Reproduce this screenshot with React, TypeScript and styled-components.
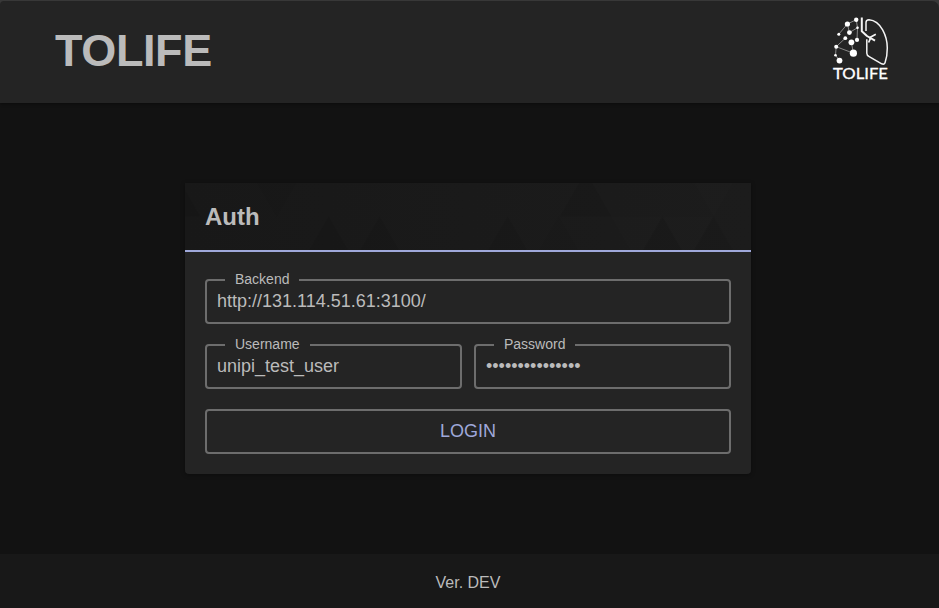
import React from "react";
import styled, { createGlobalStyle } from "styled-components";

const Global = createGlobalStyle`
  * { box-sizing: border-box; }
  body {
    margin: 0;
    background: #121212;
    color: #bbbbbb;
    font-family: "Liberation Sans", Arial, Helvetica, sans-serif;
    font-size: 18px;
  }
`;

const Page = styled.div`
  height: 608px;
  display: flex;
  flex-direction: column;
  overflow: hidden;
  background: #121212;
`;

const Frame = styled.div`
  flex: none;
  padding-top: 1px;
  background: #383838;
  box-shadow: 0 1px 3px rgba(0, 0, 0, 0.4);
`;

const Header = styled.header`
  height: 102px;
  padding: 0 50px 0 54px;
  display: flex;
  justify-content: space-between;
  align-items: flex-start;
  background: #242424;
  border-radius: 4px 7px 0 0;
`;

const Title = styled.h1`
  margin: 24px 0 0 1px;
  font-size: 45px;
  line-height: 52px;
  font-weight: 700;
  letter-spacing: -0.4px;
`;

const Logo = styled.svg`
  width: 60px;
  height: 70px;
  margin: 12px -1px 0 0;
  font-family: Lato, sans-serif;
`;

const Main = styled.main`
  flex: 1;
  display: flex;
  justify-content: center;
  align-items: flex-start;
  padding: 80px 3px 0 0;
`;

const Card = styled.section`
  width: 566px;
  height: 291px;
  background: #242424;
  border-radius: 0 0 4px 4px;
  box-shadow: 0 1px 4px rgba(0, 0, 0, 0.35);
`;

const CardHeader = styled.div`
  display: grid;
  height: 69px;
  background: linear-gradient(90deg, #181818, #1c1c1c);
  border-bottom: 2px solid #9fa8da;
  overflow: hidden;
  > * { grid-area: 1 / 1; }
`;

const Pattern = styled.svg`
  display: block;
  width: 566px;
  height: 67px;
`;

const CardTitle = styled.h2`
  margin: 20px 0 0 20px;
  font-size: 24px;
  line-height: 28px;
  z-index: 1;
`;

const Form = styled.form`
  display: flex;
  flex-direction: column;
  padding: 20px;
`;

const Row = styled.div`
  display: grid;
  grid-auto-flow: column;
  grid-auto-columns: 1fr;
  column-gap: 12px;
  margin-bottom: 13px;
`;

const Field = styled.fieldset`
  min-width: 0;
  height: 52px;
  margin: 0;
  padding: 0 10px 0 18px;
  border: 2px solid #6d6d6d;
  border-radius: 4px;
`;

const Legend = styled.legend`
  height: 16px;
  padding: 0 10px;
  font-size: 14px;
  line-height: 15px;
`;

const Input = styled.input`
  display: block;
  width: calc(100% + 8px);
  height: 22px;
  margin: 2px 0 0 -8px;
  padding: 0;
  border: 0;
  outline: 0;
  background: transparent;
  color: inherit;
  font: inherit;
`;

const LoginButton = styled.button`
  height: 45px;
  margin-top: 7px;
  padding: 0;
  border: 2px solid #6d6d6d;
  border-radius: 4px;
  background: transparent;
  color: #9fa8da;
  font: inherit;
`;

const Footer = styled.footer`
  height: 54px;
  flex: none;
  padding: 3px 3px 0 0;
  display: flex;
  align-items: center;
  justify-content: center;
  background: #181818;
  font-size: 16px;
`;

// [x of the left corner, row, direction, fill, opacity]
const triangles: [number, number, "up" | "down", string, number][] = [
  [-36, 0, "up", "#000", 0.05],
  [66, 0, "down", "#000", 0.04],
  [118, 1, "up", "#000", 0.06],
  [143, 1, "down", "#fff", 0.004],
  [169, 1, "up", "#000", 0.05],
  [194, 0, "down", "#fff", 0.005],
  [220, 1, "up", "#fff", 0.005],
  [297, 1, "up", "#000", 0.06],
  [323, 0, "up", "#fff", 0.005],
  [323, 1, "down", "#fff", 0.005],
  [348, 1, "up", "#000", 0.03],
  [375, 0, "up", "#000", 0.07],
  [426, 1, "down", "#fff", 0.009],
  [452, 1, "up", "#000", 0.04],
  [477, 0, "up", "#fff", 0.005],
  [477, 1, "down", "#fff", 0.009],
  [503, 0, "down", "#fff", 0.009],
  [503, 1, "up", "#000", 0.04],
];

const trianglePoints = (x: number, row: number, direction: "up" | "down") => {
  const top = -11 + row * 44.5;
  const bottom = top + 44.5;
  return direction === "up"
    ? `${x},${bottom} ${x + 51.3},${bottom} ${x + 25.65},${top}`
    : `${x},${top} ${x + 51.3},${top} ${x + 25.65},${bottom}`;
};

const nodes = [
  [26.2, 7.7, 2.2], [17.4, 12, 2.6], [19.4, 20.6, 2.4], [27.5, 15.7, 1.3],
  [8.8, 22.2, 1.5], [15.3, 26.2, 1.9], [27, 27.9, 2.1], [21.4, 30.3, 2.9],
  [6.2, 34.7, 2], [23.4, 41.2, 3.6], [5.5, 43.2, 1.3], [9.5, 48.6, 2.9],
];

function TolifeLogo() {
  return (
    <Logo viewBox="0 0 60 70" role="img" aria-label="TOLIFE">
      <g transform="translate(0 -1)" fill="none" stroke="#f4f4f4">
        <path
          strokeWidth=".65"
          opacity=".75"
          d="M8.8 22.2 17.4 12 26.2 7.7 27.5 15.7 19.4 20.6 17.4 12M27.5 15.7 27 27.9M15.3 26.2 6.2 34.7 5.5 43.2 9.5 48.6M6.2 34.7 23.4 41.2 21.4 30.3"
        />
        {nodes.map(([x, y, r]) => (
          <circle key={`${x}-${y}`} cx={x} cy={y} r={r} fill="#fff" stroke="none" />
        ))}
        <path strokeWidth="2" strokeLinejoin="round" d="M31.8 5.5V19.3L37 24 45 28.6" />
        <path strokeWidth="1.7" d="M39 26 45.8 22.2M40.6 26.2 38.6 30.5" />
        <path
          strokeWidth="1.5"
          strokeLinejoin="round"
          d="M36 19V10.5Q36 7.7 39 7.7C51 8.5 57.3 24.5 57.3 36Q57.3 44 55.1 50.5Q54.3 53 51.7 51.8L39.2 44.7Q36.8 43.5 36.8 41.3V27.3"
        />
      </g>
      <text
        x="3"
        y="66.3"
        fill="#fff"
        stroke="#fff"
        strokeWidth=".3"
        fontSize="15.7"
        textLength="55"
        lengthAdjust="spacingAndGlyphs"
      >
        TOLIFE
      </text>
    </Logo>
  );
}

export default function App() {
  return (
    <Page>
      <Global />
      <Frame>
        <Header>
          <Title>TOLIFE</Title>
          <TolifeLogo />
        </Header>
      </Frame>
      <Main>
        <Card>
          <CardHeader>
            <Pattern viewBox="0 0 566 67" aria-hidden="true">
              {triangles.map(([x, row, direction, fill, opacity], i) => (
                <polygon
                  key={i}
                  points={trianglePoints(x, row, direction)}
                  fill={fill}
                  opacity={opacity}
                />
              ))}
            </Pattern>
            <CardTitle>Auth</CardTitle>
          </CardHeader>
          <Form onSubmit={(e) => e.preventDefault()}>
            <Row>
              <Field>
                <Legend>Backend</Legend>
                <Input aria-label="Backend" defaultValue="http://131.114.51.61:3100/" />
              </Field>
            </Row>
            <Row>
              <Field>
                <Legend>Username</Legend>
                <Input aria-label="Username" defaultValue="unipi_test_user" />
              </Field>
              <Field>
                <Legend>Password</Legend>
                <Input aria-label="Password" type="password" defaultValue="passwordexample" />
              </Field>
            </Row>
            <LoginButton type="submit">LOGIN</LoginButton>
          </Form>
        </Card>
      </Main>
      <Footer>Ver. DEV</Footer>
    </Page>
  );
}
